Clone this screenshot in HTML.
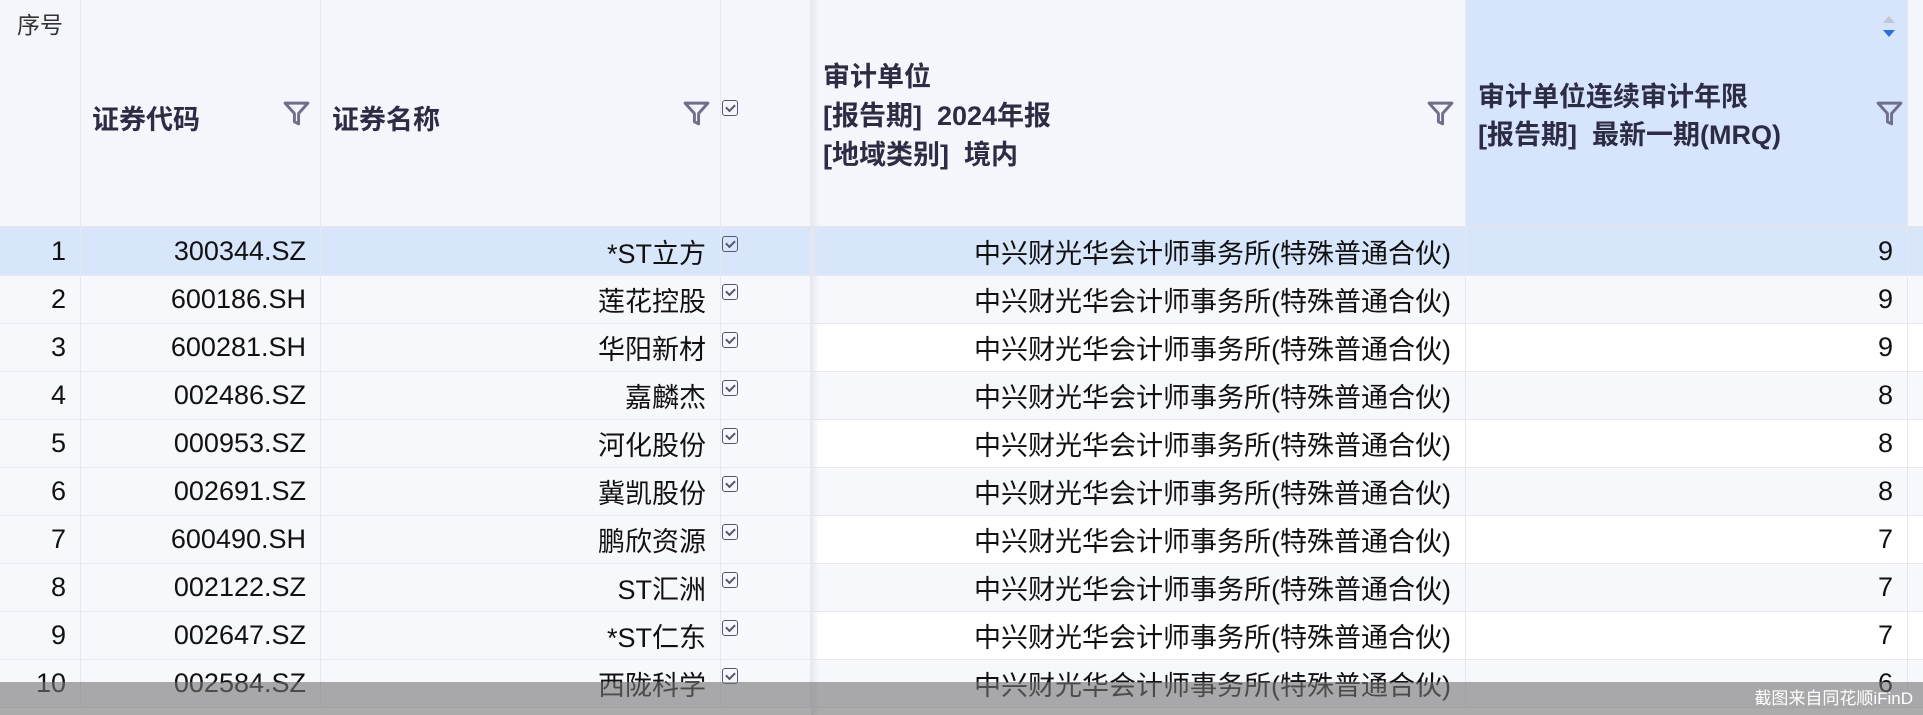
<!DOCTYPE html>
<html><head><meta charset="utf-8"><style>
*{margin:0;padding:0;box-sizing:border-box}
body{width:1923px;height:715px;overflow:hidden;background:#fff;font-family:"Liberation Sans","Noto Sans CJK SC",sans-serif;position:relative}
.c{position:absolute;overflow:hidden}
.hd{background:#f5f6fb;border-right:1px solid #e7e8ef;border-bottom:2px solid #e4e5ec;color:#2c2d45;font-weight:bold;font-size:27px}
.d{font-size:27px;color:#111;border-right:1px solid #e7e8ef;border-bottom:1px solid #e7e8ef;display:flex;align-items:center;justify-content:flex-end;padding-right:14px;height:48px}
.cb{position:absolute;width:16px;height:16px;border:1.7px solid #55566f;border-radius:3px}
.cb:after{content:"";position:absolute;left:3px;top:3px;width:7px;height:4px;border-left:2px solid #55566f;border-bottom:2px solid #55566f;transform:rotate(-45deg)}
.f{position:absolute;width:27px;height:27px}
</style></head><body>
<div class="c hd" style="left:0;top:0;width:81px;height:228px;font-weight:normal;font-size:23px;text-align:center;padding-top:6px;color:#333">序号</div>
<div class="c hd" style="left:81px;top:0;width:240px;height:228px"><div style="position:absolute;left:11px;top:98px">证券代码</div>
<svg class="f" style="left:202px;top:100px" viewBox="0 0 26 26"><path d="M2 3H24L15 13V23L11 21V13Z" fill="none" stroke="#6e6f8a" stroke-width="2.8" stroke-linejoin="round"/></svg></div>
<div class="c hd" style="left:321px;top:0;width:400px;height:228px"><div style="position:absolute;left:11px;top:98px">证券名称</div>
<svg class="f" style="left:362px;top:100px" viewBox="0 0 26 26"><path d="M2 3H24L15 13V23L11 21V13Z" fill="none" stroke="#6e6f8a" stroke-width="2.8" stroke-linejoin="round"/></svg></div>
<div class="c hd" style="left:721px;top:0;width:90px;height:228px"><div class="cb" style="left:1px;top:100px"></div></div>
<div class="c" style="left:811px;top:0;width:8px;height:715px;background:linear-gradient(90deg,#e6e7ef,rgba(240,241,246,0));z-index:2"></div>
<div class="c hd" style="left:811px;top:0;width:655px;height:228px;line-height:39px"><div style="position:absolute;left:12px;top:58px">审计单位<br>[报告期]&nbsp;&nbsp;2024年报<br>[地域类别]&nbsp;&nbsp;境内</div>
<svg class="f" style="left:616px;top:100px" viewBox="0 0 26 26"><path d="M2 3H24L15 13V23L11 21V13Z" fill="none" stroke="#6e6f8a" stroke-width="2.8" stroke-linejoin="round"/></svg></div>
<div class="c hd" style="left:1466px;top:0;width:442px;height:228px;background:#d7e5fc;line-height:38px"><div style="position:absolute;left:12px;top:78px">审计单位连续审计年限<br>[报告期]&nbsp;&nbsp;最新一期(MRQ)</div>
<svg style="position:absolute;left:416px;top:15px" width="14" height="26"><path d="M1 8L7 1L13 8Z" fill="#c4c5d3"/><path d="M1 15H13L7 22Z" fill="#2a6fdb"/></svg>
<svg class="f" style="left:410px;top:100px" viewBox="0 0 26 26"><path d="M2 3H24L15 13V23L11 21V13Z" fill="none" stroke="#6e6f8a" stroke-width="2.8" stroke-linejoin="round"/></svg></div>
<div class="c hd" style="left:1908px;top:0;width:15px;height:228px;border-right:none"></div>
<div style="position:absolute;left:0;top:228px;width:1923px">
<div style="display:flex;height:48px;background:#d8e6fc"><div class="d" style="width:81px">1</div><div class="d" style="width:240px">300344.SZ</div><div class="d" style="width:400px">*ST立方</div><div class="d" style="width:90px;position:relative"><div class="cb" style="left:1px;top:8px"></div></div><div class="d" style="width:655px">中兴财光华会计师事务所(特殊普通合伙)</div><div class="d" style="width:442px">9</div><div class="d" style="width:15px;border-right:none"></div></div>
<div style="display:flex;height:48px;background:#f7f8fc"><div class="d" style="width:81px">2</div><div class="d" style="width:240px">600186.SH</div><div class="d" style="width:400px">莲花控股</div><div class="d" style="width:90px;position:relative"><div class="cb" style="left:1px;top:8px"></div></div><div class="d" style="width:655px">中兴财光华会计师事务所(特殊普通合伙)</div><div class="d" style="width:442px">9</div><div class="d" style="width:15px;border-right:none"></div></div>
<div style="display:flex;height:48px;background:#f7f8fc"><div class="d" style="width:81px">3</div><div class="d" style="width:240px">600281.SH</div><div class="d" style="width:400px">华阳新材</div><div class="d" style="width:90px;position:relative"><div class="cb" style="left:1px;top:8px"></div></div><div class="d" style="width:655px;background:#fff">中兴财光华会计师事务所(特殊普通合伙)</div><div class="d" style="width:442px;background:#fff">9</div><div class="d" style="width:15px;border-right:none;background:#fff"></div></div>
<div style="display:flex;height:48px;background:#f7f8fc"><div class="d" style="width:81px">4</div><div class="d" style="width:240px">002486.SZ</div><div class="d" style="width:400px">嘉麟杰</div><div class="d" style="width:90px;position:relative"><div class="cb" style="left:1px;top:8px"></div></div><div class="d" style="width:655px">中兴财光华会计师事务所(特殊普通合伙)</div><div class="d" style="width:442px">8</div><div class="d" style="width:15px;border-right:none"></div></div>
<div style="display:flex;height:48px;background:#f7f8fc"><div class="d" style="width:81px">5</div><div class="d" style="width:240px">000953.SZ</div><div class="d" style="width:400px">河化股份</div><div class="d" style="width:90px;position:relative"><div class="cb" style="left:1px;top:8px"></div></div><div class="d" style="width:655px;background:#fff">中兴财光华会计师事务所(特殊普通合伙)</div><div class="d" style="width:442px;background:#fff">8</div><div class="d" style="width:15px;border-right:none;background:#fff"></div></div>
<div style="display:flex;height:48px;background:#f7f8fc"><div class="d" style="width:81px">6</div><div class="d" style="width:240px">002691.SZ</div><div class="d" style="width:400px">冀凯股份</div><div class="d" style="width:90px;position:relative"><div class="cb" style="left:1px;top:8px"></div></div><div class="d" style="width:655px">中兴财光华会计师事务所(特殊普通合伙)</div><div class="d" style="width:442px">8</div><div class="d" style="width:15px;border-right:none"></div></div>
<div style="display:flex;height:48px;background:#f7f8fc"><div class="d" style="width:81px">7</div><div class="d" style="width:240px">600490.SH</div><div class="d" style="width:400px">鹏欣资源</div><div class="d" style="width:90px;position:relative"><div class="cb" style="left:1px;top:8px"></div></div><div class="d" style="width:655px;background:#fff">中兴财光华会计师事务所(特殊普通合伙)</div><div class="d" style="width:442px;background:#fff">7</div><div class="d" style="width:15px;border-right:none;background:#fff"></div></div>
<div style="display:flex;height:48px;background:#f7f8fc"><div class="d" style="width:81px">8</div><div class="d" style="width:240px">002122.SZ</div><div class="d" style="width:400px">ST汇洲</div><div class="d" style="width:90px;position:relative"><div class="cb" style="left:1px;top:8px"></div></div><div class="d" style="width:655px">中兴财光华会计师事务所(特殊普通合伙)</div><div class="d" style="width:442px">7</div><div class="d" style="width:15px;border-right:none"></div></div>
<div style="display:flex;height:48px;background:#f7f8fc"><div class="d" style="width:81px">9</div><div class="d" style="width:240px">002647.SZ</div><div class="d" style="width:400px">*ST仁东</div><div class="d" style="width:90px;position:relative"><div class="cb" style="left:1px;top:8px"></div></div><div class="d" style="width:655px;background:#fff">中兴财光华会计师事务所(特殊普通合伙)</div><div class="d" style="width:442px;background:#fff">7</div><div class="d" style="width:15px;border-right:none;background:#fff"></div></div>
<div style="display:flex;height:48px;background:#f7f8fc"><div class="d" style="width:81px">10</div><div class="d" style="width:240px">002584.SZ</div><div class="d" style="width:400px">西陇科学</div><div class="d" style="width:90px;position:relative"><div class="cb" style="left:1px;top:8px"></div></div><div class="d" style="width:655px">中兴财光华会计师事务所(特殊普通合伙)</div><div class="d" style="width:442px">6</div><div class="d" style="width:15px;border-right:none"></div></div>
</div>
<div style="position:absolute;left:0;top:682px;width:1923px;height:33px;background:rgba(115,115,115,0.6);z-index:5;color:#fff;font-size:17px;text-align:right;padding-right:10px;line-height:33px">截图来自同花顺iFinD</div>
</body></html>
